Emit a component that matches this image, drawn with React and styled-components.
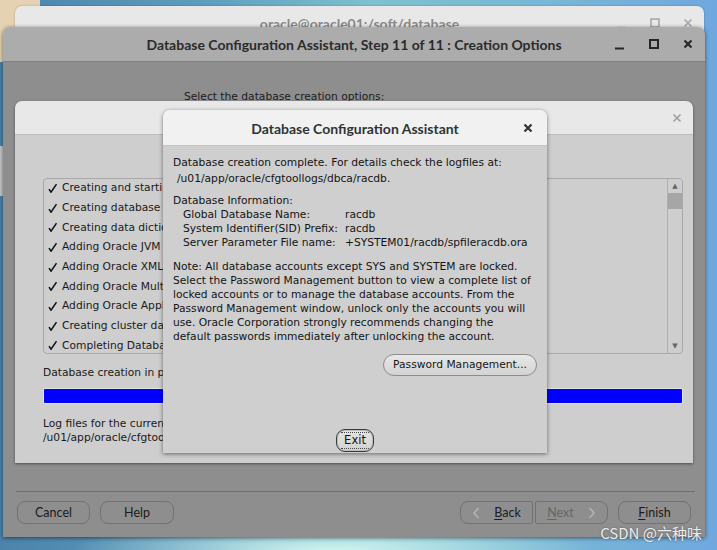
import styled, { createGlobalStyle } from "styled-components";

const GlobalStyle = createGlobalStyle`
  html, body {
    margin: 0;
    padding: 0;
  }
  body {
    width: 717px;
    height: 550px;
    overflow: hidden;
  }
`;

const javaFont = `"DejaVu Sans", "Liberation Sans", sans-serif`;
const gnomeFont = `Lato, "Noto Sans", sans-serif`;

const Desktop = styled.div`
  position: relative;
  width: 717px;
  height: 550px;
  overflow: hidden;
  background:
    radial-gradient(ellipse 260px 40px at 330px 552px, rgba(215, 248, 242, 0.95), rgba(215, 248, 242, 0)),
    linear-gradient(90deg, #4c83ab 0%, #5e9dbe 28%, #7cc2cf 52%, #78b6d6 78%, #6fa8df 100%);
`;

const DesktopIcon = styled.div`
  position: absolute;
  left: 0;
  top: 0;
  width: 40px;
  height: 62px;
  background: #e4d2b2;
`;

const DesktopThumb = styled.div`
  position: absolute;
  left: 0;
  top: 146px;
  width: 4px;
  height: 50px;
  background: #c9c9c9;
`;

/* ---------- generic window frame ---------- */

const Frame = styled.div`
  position: absolute;
  left: ${(p) => p.$x}px;
  top: ${(p) => p.$y}px;
  width: ${(p) => p.$w}px;
  height: ${(p) => p.$h}px;
  display: flex;
  flex-direction: column;
  border-radius: 7px 7px 0 0;
  overflow: hidden;
  box-shadow: ${(p) => p.$shadow};
`;

const TitleBar = styled.div`
  flex: none;
  height: ${(p) => p.$h}px;
  display: grid;
  grid-template-columns: 1fr auto 1fr;
  align-items: center;
  background: ${(p) => p.$bg};
  border-bottom: 1px solid ${(p) => p.$line};
  font-family: ${gnomeFont};
  font-weight: 700;
  font-size: ${(p) => p.$size || 14}px;
  color: ${(p) => p.$color};
`;

const TitleText = styled.div`
  grid-column: 2;
  white-space: nowrap;
  padding-top: 1px;
`;

const Controls = styled.div`
  grid-column: 3;
  justify-self: end;
  display: flex;
  align-items: center;
  gap: ${(p) => p.$gap}px;
  padding-right: ${(p) => p.$pad}px;
`;

const Glyph = styled.svg`
  display: block;
  width: 16px;
  height: 16px;
`;

const MinIcon = ({ color, w = 2 }) => (
  <Glyph viewBox="0 0 16 16">
    <path d="M3 12.5h9" stroke={color} strokeWidth={w} />
  </Glyph>
);

const MaxIcon = ({ color, w = 2 }) => (
  <Glyph viewBox="0 0 16 16">
    <rect x="4" y="4" width="8" height="8" fill="none" stroke={color} strokeWidth={w} />
  </Glyph>
);

const CloseIcon = ({ color, w = 2 }) => (
  <Glyph viewBox="0 0 16 16">
    <path d="M4.5 4.5l7 7M11.5 4.5l-7 7" stroke={color} strokeWidth={w} />
  </Glyph>
);

/* ---------- terminal window behind ---------- */

const TermBody = styled.div`
  flex: 1;
  background: #e8e8e8;
`;

/* ---------- main DBCA window ---------- */

const MainBody = styled.div`
  flex: 1;
  display: flex;
  flex-direction: column;
  background: #8e8e8e;
`;

const Prompt = styled.div`
  margin: 28px 0 0 181px;
  font-family: ${javaFont};
  font-size: 10.7px;
  line-height: 14px;
  color: #1c1c1c;
`;

const Spacer = styled.div`
  flex: 1;
`;

const Separator = styled.div`
  margin: 0 10px 0 13px;
  border-top: 1px solid #6e6e6e;
`;

const ButtonRow = styled.div`
  display: flex;
  align-items: center;
  gap: 10px;
  height: 23px;
  margin: 9px 0 13px;
  padding: 0 14px;
`;

const NavButton = styled.div`
  box-sizing: border-box;
  width: ${(p) => p.$w}px;
  height: 23px;
  display: flex;
  align-items: center;
  justify-content: center;
  gap: 14px;
  border: 1px solid #727272;
  border-radius: ${(p) => p.$radius || "8px"};
  font-family: ${gnomeFont};
  font-size: 12.5px;
  color: ${(p) => (p.$disabled ? "#666" : "#1b1b1b")};
  u {
    text-decoration-thickness: 1px;
    text-underline-offset: 2px;
  }
`;

const Pair = styled.div`
  display: flex;
  gap: 2px;
  margin-left: auto;
`;

const Chevron = ({ dir }) => (
  <svg width="8" height="12" viewBox="0 0 8 12">
    <path
      d={dir === "left" ? "M6.5 1L2 6l4.5 5" : "M1.5 1L6 6l-4.5 5"}
      fill="none"
      stroke="#b4b4b4"
      strokeWidth="1.6"
    />
  </svg>
);

/* ---------- progress dialog ---------- */

const ProgressBody = styled.div`
  flex: 1;
  display: flex;
  flex-direction: column;
  padding: 43px 10px 0 28px;
  background: #cecece;
  font-family: ${javaFont};
  font-size: 10.7px;
  color: #1a1a1a;
`;

const ListBox = styled.div`
  box-sizing: border-box;
  height: 176px;
  display: flex;
  border: 1px solid #a9a9a9;
  border-radius: 4px;
  overflow: hidden;
`;

const Steps = styled.div`
  flex: 1;
  margin-top: -1px;
  padding-left: 4px;
`;

const Step = styled.div`
  height: 19.7px;
  display: flex;
  align-items: center;
  gap: 5px;
  white-space: nowrap;
`;

const Tick = () => (
  <svg width="9" height="10" viewBox="0 0 9 10">
    <path d="M1 6.2L3 9.2L8.5 1.2" fill="none" stroke="#111" strokeWidth="1.5" />
  </svg>
);

const Scrollbar = styled.div`
  width: 14px;
  display: flex;
  flex-direction: column;
  border-left: 1px solid #b0b0b0;
`;

const Arrow = styled.div`
  height: 14px;
  display: flex;
  align-items: center;
  justify-content: center;
  font-size: 7px;
  color: #666;
`;

const Thumb = styled.div`
  height: 16px;
  background: #a6a6a6;
`;

const Track = styled.div`
  flex: 1;
`;

const Line = styled.div`
  line-height: 14px;
  white-space: nowrap;
  margin-top: ${(p) => p.$mt || 0}px;
`;

const Bar = styled.div`
  box-sizing: border-box;
  height: 16px;
  margin: 8px 0 13px;
  background: #0000ff;
  border: 1px solid #e4e4e4;
  border-radius: 2px;
`;

/* ---------- modal ---------- */

const ModalBody = styled.div`
  flex: 1;
  display: flex;
  flex-direction: column;
  padding: 10px 10px 1px;
  background: #cfcfcf;
  font-family: ${javaFont};
  font-size: 10.7px;
  line-height: 14px;
  color: #141414;
`;

const Para = styled.div`
  margin-bottom: ${(p) => p.$mb || 0}px;
  white-space: nowrap;
`;

const Indent = styled.div`
  padding-left: 4px;
  margin-top: 2px;
`;

const InfoGrid = styled.div`
  display: grid;
  grid-template-columns: 162px auto;
  padding-left: 10px;
`;

const PillButton = styled.div`
  box-sizing: border-box;
  align-self: flex-end;
  height: 22px;
  margin-top: 10px;
  padding: 0 9px;
  display: flex;
  align-items: center;
  border: 1px solid #8d8d8d;
  border-radius: 11px;
  background: linear-gradient(#e8e8e8, #d3d3d3);
  color: #161616;
`;

const ExitButton = styled.div`
  box-sizing: border-box;
  align-self: center;
  margin-top: auto;
  width: 38px;
  height: 23px;
  display: flex;
  align-items: center;
  justify-content: center;
  border: 1px solid #3a3a3a;
  border-radius: 9px;
  background: linear-gradient(#e4e4e4, #d2d2d2);
  box-shadow: inset 0 0 0 1px #bdbdbd;
  span {
    border-top: 1px dotted #4a4a4a;
    border-bottom: 1px dotted #4a4a4a;
    padding: 1px 3px;
    line-height: 13px;
    font-size: 11.5px;
  }
`;

const Watermark = styled.div`
  position: absolute;
  right: 15px;
  bottom: 7px;
  font-family: "Noto Sans CJK SC", "Noto Sans", sans-serif;
  font-size: 15px;
  color: rgba(255, 255, 255, 0.88);
  text-shadow: 0 0 2px rgba(60, 60, 60, 0.6);
`;

const steps = [
  "Creating and starting Oracle instance",
  "Creating database files",
  "Creating data dictionary views",
  "Adding Oracle JVM",
  "Adding Oracle XML DB",
  "Adding Oracle Multimedia",
  "Adding Oracle Application Express",
  "Creating cluster database views",
  "Completing Database Creation",
];

const info = [
  ["Global Database Name:", "racdb"],
  ["System Identifier(SID) Prefix:", "racdb"],
  ["Server Parameter File name:", "+SYSTEM01/racdb/spfileracdb.ora"],
];

const note = [
  "Note: All database accounts except SYS and SYSTEM are locked.",
  "Select the Password Management button to view a complete list of",
  "locked accounts or to manage the database accounts. From the",
  "Password Management window, unlock only the accounts you will",
  "use. Oracle Corporation strongly recommends changing the",
  "default passwords immediately after unlocking the account.",
];

export default function App() {
  return (
    <Desktop>
      <GlobalStyle />
      <DesktopIcon />
      <DesktopThumb />

      <Frame $x={15} $y={6} $w={689} $h={60} $shadow="0 0 2px rgba(0,0,0,0.3)">
        <TitleBar $h={33} $bg="#e8e8e8" $line="#e8e8e8" $color="#8a8a8a">
          <TitleText>oracle@oracle01:/soft/database</TitleText>
          <Controls $gap={17} $pad={8}>
            <MinIcon color="#a3a3a3" w={1.5} />
            <MaxIcon color="#a3a3a3" w={1.5} />
            <CloseIcon color="#a3a3a3" w={1.5} />
          </Controls>
        </TitleBar>
        <TermBody />
      </Frame>

      <Frame $x={3} $y={27} $w={702} $h={510} $shadow="0 1px 4px rgba(0,0,0,0.55)">
        <TitleBar $h={34} $bg="#acacac" $line="#7f7f7f" $color="#2b2b2b">
          <TitleText>Database Configuration Assistant, Step 11 of 11 : Creation Options</TitleText>
          <Controls $gap={18} $pad={9}>
            <MinIcon color="#262626" />
            <MaxIcon color="#262626" />
            <CloseIcon color="#262626" />
          </Controls>
        </TitleBar>
        <MainBody>
          <Prompt>Select the database creation options:</Prompt>
          <Spacer />
          <Separator />
          <ButtonRow>
            <NavButton $w={73}>Cancel</NavButton>
            <NavButton $w={74}>Help</NavButton>
            <Pair>
              <NavButton $w={73} $radius="8px 2px 2px 8px">
                <Chevron dir="left" />
                <span>
                  <u>B</u>ack
                </span>
              </NavButton>
              <NavButton $w={73} $radius="2px 8px 8px 2px" $disabled>
                <span>
                  <u>N</u>ext
                </span>
                <Chevron dir="right" />
              </NavButton>
            </Pair>
            <NavButton $w={73}>
              <span>
                <u>F</u>inish
              </span>
            </NavButton>
          </ButtonRow>
        </MainBody>
      </Frame>

      <Frame $x={15} $y={101} $w={678} $h={362} $shadow="0 1px 3px rgba(0,0,0,0.45)">
        <TitleBar $h={33} $bg="#e8e8e8" $line="#bdbdbd" $color="#444">
          <TitleText />
          <Controls $gap={0} $pad={8}>
            <CloseIcon color="#9c9c9c" w={1.5} />
          </Controls>
        </TitleBar>
        <ProgressBody>
          <ListBox>
            <Steps>
              {steps.map((s) => (
                <Step key={s}>
                  <Tick />
                  {s}
                </Step>
              ))}
            </Steps>
            <Scrollbar>
              <Arrow>▲</Arrow>
              <Thumb />
              <Track />
              <Arrow>▼</Arrow>
            </Scrollbar>
          </ListBox>
          <Line $mt={12}>Database creation in progress</Line>
          <Bar />
          <Line>Log files for the current operation are located at:</Line>
          <Line>/u01/app/oracle/cfgtoollogs/dbca/racdb</Line>
        </ProgressBody>
      </Frame>

      <Frame $x={163} $y={110} $w={384} $h={343} $shadow="0 1px 4px rgba(0,0,0,0.5)">
        <TitleBar $h={35} $bg="#f1f1f1" $line="#c4c4c4" $color="#2e3436">
          <TitleText>Database Configuration Assistant</TitleText>
          <Controls $gap={0} $pad={11}>
            <CloseIcon color="#2e3436" w={2.2} />
          </Controls>
        </TitleBar>
        <ModalBody>
          <Para $mb={8}>
            Database creation complete. For details check the logfiles at:
            <Indent>/u01/app/oracle/cfgtoollogs/dbca/racdb.</Indent>
          </Para>
          <Para $mb={10}>
            Database Information:
            <InfoGrid>
              {info.map(([k, v]) => (
                <>
                  <span key={k}>{k}</span>
                  <span key={v + k}>{v}</span>
                </>
              ))}
            </InfoGrid>
          </Para>
          <Para>
            {note.map((l) => (
              <div key={l}>{l}</div>
            ))}
          </Para>
          <PillButton>Password Management...</PillButton>
          <ExitButton>
            <span>Exit</span>
          </ExitButton>
        </ModalBody>
      </Frame>

      <Watermark>CSDN @六种味</Watermark>
    </Desktop>
  );
}
